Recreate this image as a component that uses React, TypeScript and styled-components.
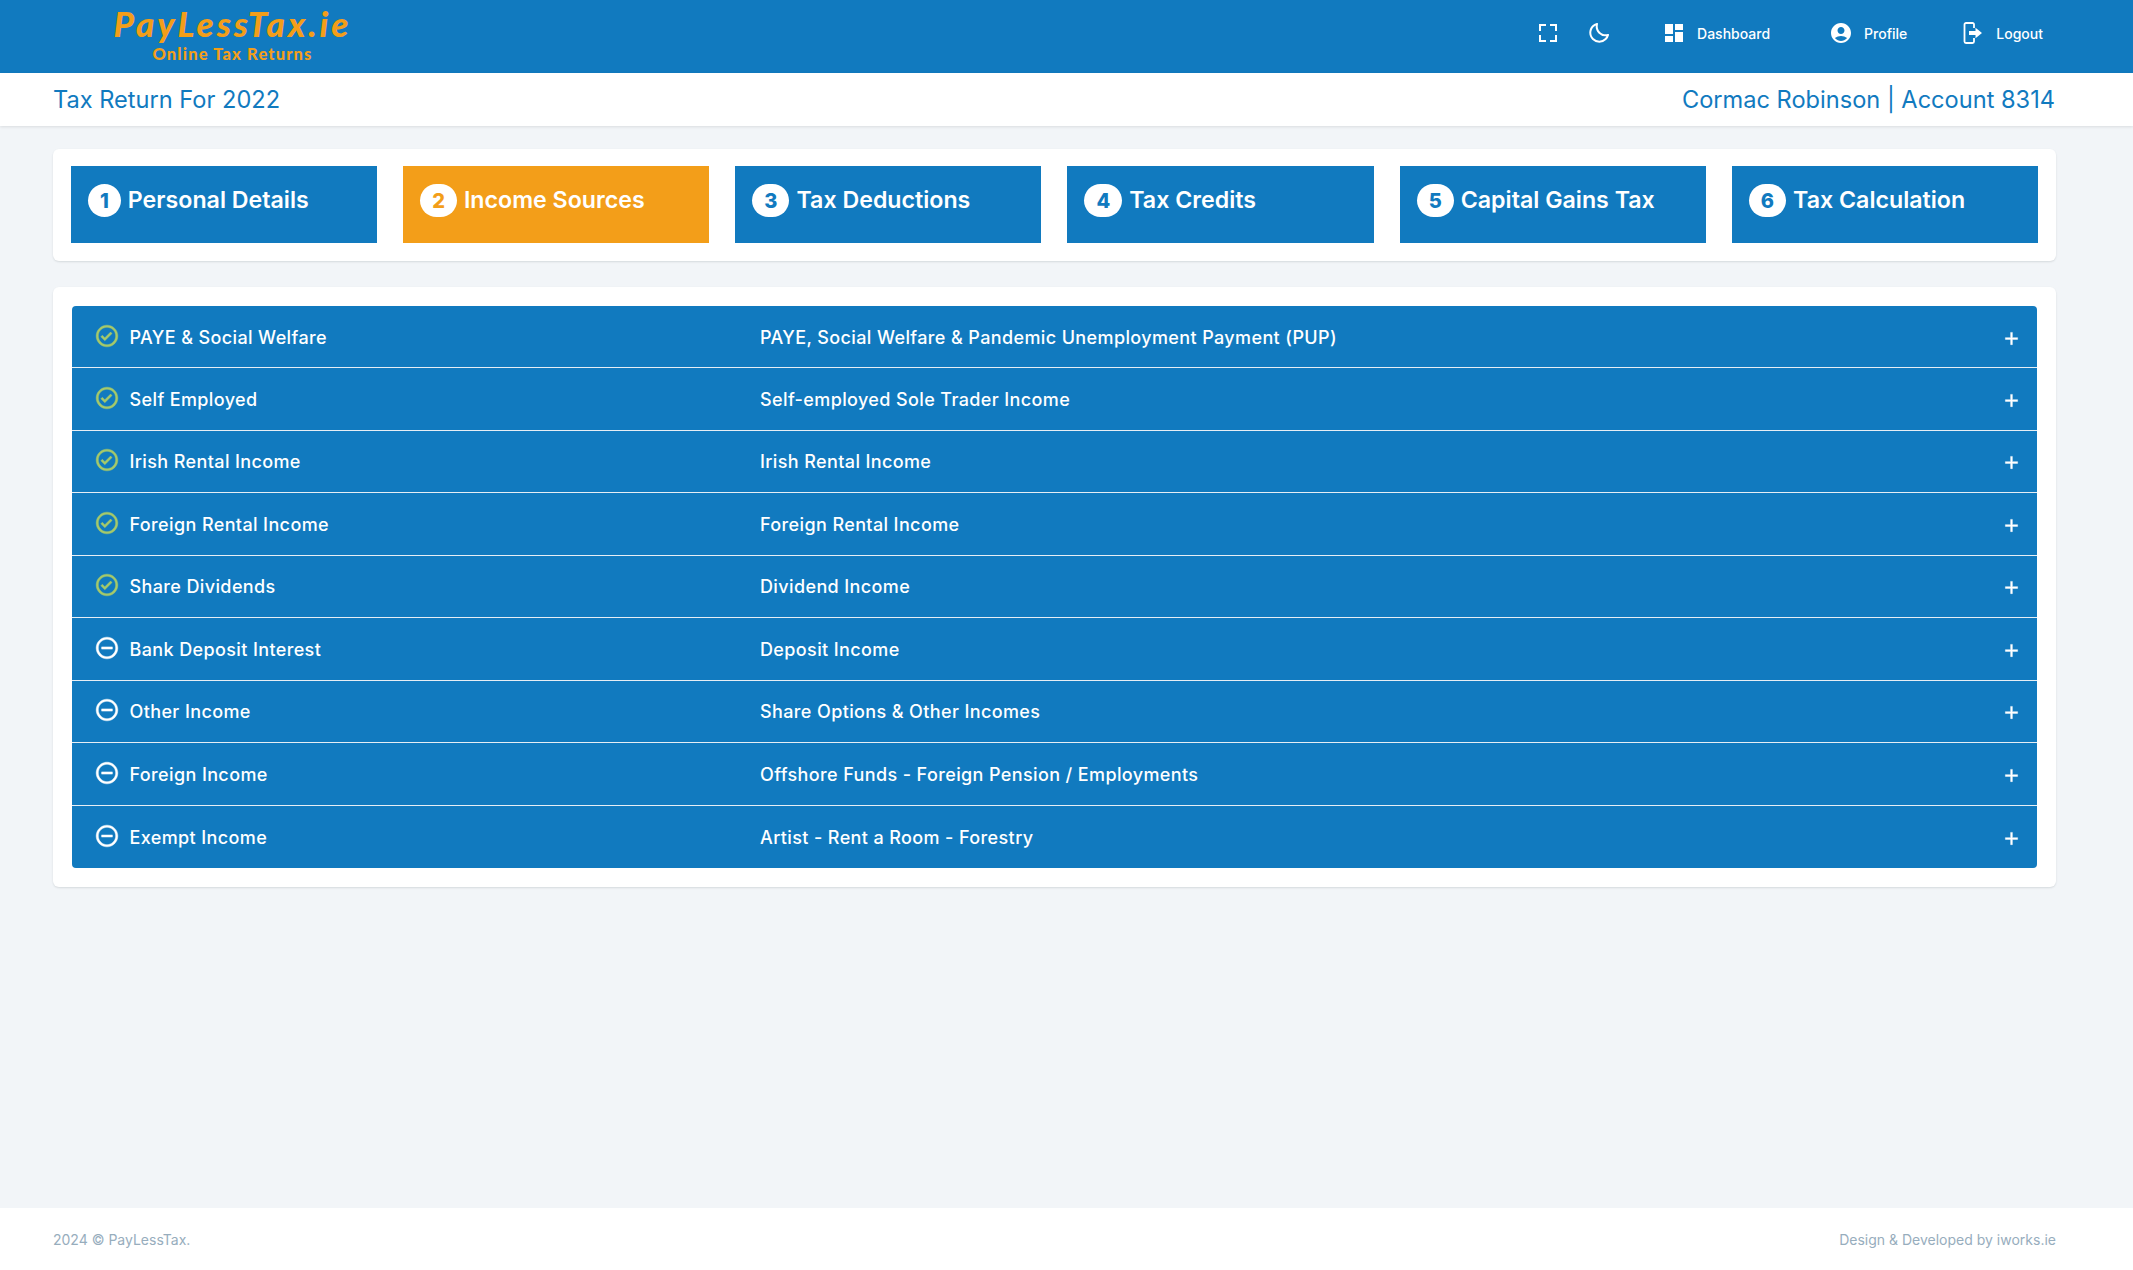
import React from "react";
import styled, { createGlobalStyle } from "styled-components";
import { BiCheckCircle, BiFullscreen, BiMinusCircle, BiMoon, BiPlus } from "react-icons/bi";
import { MdAccountCircle, MdDashboard } from "react-icons/md";

const BLUE = "#117abf";
const ORANGE = "#f39e19";

const steps = [
  "Personal Details",
  "Income Sources",
  "Tax Deductions",
  "Tax Credits",
  "Capital Gains Tax",
  "Tax Calculation",
];

const incomes = [
  { name: "PAYE & Social Welfare", info: "PAYE, Social Welfare & Pandemic Unemployment Payment (PUP)", done: true },
  { name: "Self Employed", info: "Self-employed Sole Trader Income", done: true },
  { name: "Irish Rental Income", info: "Irish Rental Income", done: true },
  { name: "Foreign Rental Income", info: "Foreign Rental Income", done: true },
  { name: "Share Dividends", info: "Dividend Income", done: true },
  { name: "Bank Deposit Interest", info: "Deposit Income", done: false },
  { name: "Other Income", info: "Share Options & Other Incomes", done: false },
  { name: "Foreign Income", info: "Offshore Funds - Foreign Pension / Employments", done: false },
  { name: "Exempt Income", info: "Artist - Rent a Room - Forestry", done: false },
];

const LogoutIcon = () => (
  <svg width="20" height="24" viewBox="0 0 20 24" fill="none">
    <path d="M11 7V3.5C11 2.7 10.3 2 9.5 2H3C2.2 2 1.5 2.7 1.5 3.5V20.5C1.5 21.3 2.2 22 3 22H9.5C10.3 22 11 21.3 11 20.5V17" stroke="#fff" strokeWidth="1.8" />
    <path d="M6 10H12.5V6.8L19 12L12.5 17.2V14H6Z" fill="#fff" />
  </svg>
);

const App: React.FC = () => {
  return (
    <>
      <GlobalStyle />
      <Page>
        <TopBar>
          <Logo>
            <LogoTitle>PayLessTax.ie</LogoTitle>
            <LogoSub>Online Tax Returns</LogoSub>
          </Logo>
          <TopActions>
            <IconButton>
              <BiFullscreen size={24} />
            </IconButton>
            <IconButton $left={27}>
              <BiMoon size={24} />
            </IconButton>
            <NavLink $left={51} $gap={11}>
              <MdDashboard size={24} />
              Dashboard
            </NavLink>
            <NavLink $left={59} $gap={11}>
              <MdAccountCircle size={24} />
              Profile
            </NavLink>
            <NavLink $left={56} $gap={13}>
              <LogoutIcon />
              Logout
            </NavLink>
          </TopActions>
        </TopBar>

        <SubBar>
          <span>Tax Return For 2022</span>
          <span>Cormac Robinson | Account 8314</span>
        </SubBar>

        <Content>
          <StepsCard>
            {steps.map((step, i) => (
              <Step key={step} $active={i === 1}>
                <StepNumber $active={i === 1}>{i + 1}</StepNumber>
                {step}
              </Step>
            ))}
          </StepsCard>

          <ListCard>
            <List>
              {incomes.map((item) => (
                <Row key={item.name}>
                  <StatusIcon $done={item.done}>
                    {item.done ? <BiCheckCircle size={26} /> : <BiMinusCircle size={26} />}
                  </StatusIcon>
                  <div>{item.name}</div>
                  <div>{item.info}</div>
                  <PlusWrap>
                    <BiPlus size={21} />
                  </PlusWrap>
                </Row>
              ))}
            </List>
          </ListCard>
        </Content>

        <Footer>
          <span>2024 © PayLessTax.</span>
          <span>Design & Developed by iworks.ie</span>
        </Footer>
      </Page>
    </>
  );
};

export default App;

const GlobalStyle = createGlobalStyle`
  html, body {
    margin: 0;
    padding: 0;
    background: #f2f5f8;
  }
  * {
    box-sizing: border-box;
  }
`;

const Page = styled.div`
  display: flex;
  flex-direction: column;
  height: 1270px;
  font-family: Inter, "Noto Sans", sans-serif;
`;

const TopBar = styled.header`
  display: flex;
  align-items: center;
  justify-content: space-between;
  height: 73px;
  padding: 0 90px 0 114px;
  background: ${BLUE};
  color: #fff;
`;

const Logo = styled.div`
  display: flex;
  flex-direction: column;
  align-items: center;
  align-self: flex-start;
  width: 237px;
  padding-top: 2px;
  color: ${ORANGE};
  font-family: Lato, sans-serif;
  font-weight: 900;
  white-space: nowrap;
`;

const LogoTitle = styled.div`
  font-size: 35px;
  font-style: italic;
  letter-spacing: 2.95px;
  line-height: 42px;
`;

const LogoSub = styled.div`
  font-size: 16.5px;
  letter-spacing: 1.15px;
  line-height: 20px;
`;

const TopActions = styled.div`
  display: flex;
  align-items: center;
  padding-bottom: 7px;
`;

const IconButton = styled.div<{ $left?: number }>`
  display: flex;
  margin-left: ${(props) => props.$left ?? 0}px;
`;

const NavLink = styled.div<{ $left: number; $gap: number }>`
  display: flex;
  align-items: center;
  gap: ${(props) => props.$gap}px;
  margin-left: ${(props) => props.$left}px;
  font-size: 14px;
  font-weight: 500;
`;

const SubBar = styled.div`
  display: flex;
  align-items: center;
  justify-content: space-between;
  height: 53px;
  padding: 0 78px 0 53px;
  background: #fff;
  box-shadow: 0 1px 3px rgba(0, 0, 0, 0.1);
  color: ${BLUE};
  font-size: 23.6px;
`;

const Content = styled.main`
  flex: 1;
  display: flex;
  flex-direction: column;
  gap: 26px;
  padding: 23px 77px 0 53px;
`;

const Card = styled.section`
  background: #fff;
  border-radius: 6px;
  box-shadow: 0 1px 2px rgba(56, 65, 74, 0.15);
`;

const StepsCard = styled(Card)`
  display: grid;
  grid-template-columns: repeat(6, 1fr);
  column-gap: 26px;
  padding: 17px 18px 18px;
`;

const Step = styled.div<{ $active: boolean }>`
  display: flex;
  align-items: flex-start;
  gap: 7px;
  height: 77px;
  padding: 18px 17px 0;
  background: ${(props) => (props.$active ? ORANGE : BLUE)};
  color: #fff;
  font-size: 23.2px;
  font-weight: 600;
  line-height: 32px;
`;

const StepNumber = styled.span<{ $active: boolean }>`
  display: inline-flex;
  align-items: center;
  justify-content: center;
  height: 33px;
  padding: 0 12px;
  border-radius: 17px;
  background: #fff;
  color: ${(props) => (props.$active ? ORANGE : BLUE)};
  font-size: 20px;
  font-weight: 800;
`;

const ListCard = styled(Card)`
  padding: 19px;
`;

const List = styled.div`
  overflow: hidden;
  border-radius: 4px;
  background: ${BLUE};
  color: #fff;
`;

const Row = styled.div`
  display: grid;
  grid-template-columns: 35.5px 630.5px 1fr 21px;
  align-items: center;
  height: 62.45px;
  padding: 0.6px 15px 0 22px;
  border-bottom: 1px solid #e6eef5;
  font-size: 18px;
  font-weight: 500;
  letter-spacing: 0.38px;

  &:last-child {
    border-bottom: 0;
  }
`;

const StatusIcon = styled.div<{ $done: boolean }>`
  display: flex;
  margin-top: -3px;
  color: ${(props) => (props.$done ? "#a5c96a" : "#fff")};

  svg {
    stroke-width: 0.4;
  }
`;

const PlusWrap = styled.div`
  display: flex;
  margin-top: 2px;

  svg {
    stroke-width: 0.5;
  }
`;

const Footer = styled.footer`
  display: flex;
  align-items: center;
  justify-content: space-between;
  height: 62px;
  padding: 0 77px 0 53px;
  background: #fff;
  color: #97adbd;
  font-size: 14px;
`;
